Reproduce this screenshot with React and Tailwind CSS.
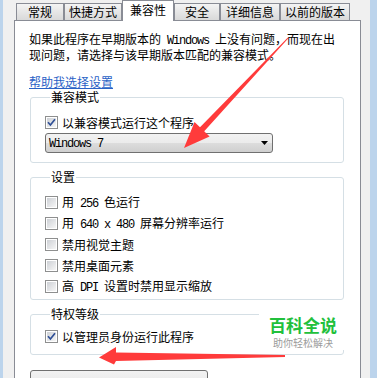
import React from "react";

// Win7 file properties dialog, compatibility tab
const TABS = [
  { label: "常规", w: "w-[48px]" },
  { label: "快捷方式", w: "w-[58px]" },
  { label: "兼容性", w: "w-[52px]", active: true },
  { label: "安全", w: "w-[46px]" },
  { label: "详细信息", w: "w-[60px]" },
  { label: "以前的版本", w: "w-[70px]" },
];

// latin runs: SimSun-like 6px fixed advance
function L({ children }) {
  return <span className="font-['Liberation_Mono',monospace] tracking-[-1.2px]">{children}</span>;
}

function Check({ checked }) {
  return (
    <span className="flex h-[13px] w-[13px] shrink-0 border border-[#8e8f8f] bg-white p-px">
      <span className="relative flex h-full w-full items-center justify-center bg-[linear-gradient(135deg,#cdd0d5,#f6f6f6)]">
        {checked && (
          <svg width="9" height="9" viewBox="0 0 9 9" className="absolute">
            <path d="M1 4.3 L3.4 7 L8 1.2" fill="none" stroke="#2f4f96" strokeWidth="1.7" />
          </svg>
        )}
      </span>
    </span>
  );
}

function Row({ checked, children }) {
  return (
    <div className="flex h-[13px] items-center gap-[4px] whitespace-nowrap leading-[13px]">
      <Check checked={checked} />
      <span>{children}</span>
    </div>
  );
}

function Group({ title, className, children }) {
  return (
    <fieldset className={`ml-px w-[314px] rounded-[3px] border border-[#d5dfe5] pl-[14px] ${className}`}>
      <legend className="ml-[5px] px-px leading-[12px]">{title}</legend>
      {children}
    </fieldset>
  );
}

export default function App() {
  return (
    <div className="relative flex h-[378px] w-[377px] overflow-hidden bg-[#f0f0f0] font-['Noto_Sans_CJK_SC',sans-serif] text-[12px] text-black">
      <div className="w-[3px] shrink-0 bg-[#bcd4ec]" />

      <div className="flex w-[367px] shrink-0 flex-col pl-[11px]">
        {/* tab strip */}
        <div className="flex h-[29px] items-end pl-[2px]">
          {TABS.map((t) =>
            t.active ? (
              <div
                key={t.label}
                className={`relative z-10 -mb-px flex h-[21px] ${t.w} items-center justify-center border border-b-0 border-[#898c95] bg-white pb-[2px] leading-[12px]`}
              >
                {t.label}
              </div>
            ) : (
              <div
                key={t.label}
                className={`flex h-[17px] ${t.w} items-center justify-center border border-b-0 border-[#898c95] bg-[linear-gradient(#f4f4f4,#e6e6e6_50%,#d9d9d9)] leading-[12px]`}
              >
                {t.label}
              </div>
            )
          )}
        </div>

        {/* tab page */}
        <div className="flex w-[347px] flex-1 flex-col border border-[#898c95] bg-white pl-[14px] pt-[11px]">
          <p className="whitespace-nowrap leading-[13px]">
            如果此程序在早期版本的<L> Windows </L>上没有问题，而现在出
            <br />
            现问题，请选择与该早期版本匹配的兼容模式。
          </p>
          <a className="mt-[15px] w-fit leading-[12px] text-[#2a62c6] underline underline-offset-[1px]">帮助我选择设置</a>

          <Group title="兼容模式" className="mt-[3px] pb-[9px] pt-[13px]">
            <Row checked>以兼容模式运行这个程序</Row>
            <div className="mt-[4px] flex h-[20px] w-[228px] items-center justify-between rounded-[3px] border border-[#707070] bg-[linear-gradient(#f2f2f2,#ebebeb_50%,#dddddd_50%,#cfcfcf)] pl-[3px] pr-[4px] leading-[12px]">
              <span className="whitespace-nowrap">
                <L>Windows 7</L>
              </span>
              <svg width="7" height="4" viewBox="0 0 7 4">
                <path d="M0 0H7L3.5 4Z" fill="#000" />
              </svg>
            </div>
          </Group>

          <Group title="设置" className="mt-[8px] flex flex-col gap-[8px] pb-[6px] pt-[13px]">
            <Row>
              用<L> 256 </L>色运行
            </Row>
            <Row>
              用<L> 640 x 480 </L>屏幕分辨率运行
            </Row>
            <Row>禁用视觉主题</Row>
            <Row>禁用桌面元素</Row>
            <Row>
              高<L> DPI </L>设置时禁用显示缩放
            </Row>
          </Group>

          <Group title="特权等级" className="mt-[8px] pb-[11px] pt-[10px]">
            <Row checked>以管理员身份运行此程序</Row>
          </Group>

          <div className="ml-px mt-[15px] h-[23px] w-[178px] shrink-0 rounded-[3px] border border-[#707070] bg-[linear-gradient(#f2f2f2,#ebebeb_50%,#dddddd_50%,#cfcfcf)]" />
        </div>
      </div>

      <div className="w-[7px] shrink-0 bg-[#bcd4ec]" />

      {/* watermark */}
      <div className="absolute left-[259px] top-[313px] z-20 flex h-[37px] w-[88px] flex-col items-center bg-white pt-[3px]">
        <span className="text-[17px] font-bold leading-[18px] text-[#22c03c]">百科全说</span>
        <span className="mt-[3px] text-[10px] leading-[11px] text-[#9b9b9b]">助你轻松解决</span>
      </div>

      {/* annotation arrows */}
      <svg className="pointer-events-none absolute left-0 top-0 z-30" width="377" height="378" viewBox="0 0 377 378">
        <polygon
          fill="#ff3b3b"
          points="287.6,37.7 200,127.3 194.5,122 184,148 209.6,136.6 204.2,131.3 288.4,38.3"
        />
        <polygon
          fill="#ff3b3b"
          points="99,357.5 116,347 116,352.5 285,355 285,357 116,361 114,364.5"
        />
      </svg>
    </div>
  );
}
